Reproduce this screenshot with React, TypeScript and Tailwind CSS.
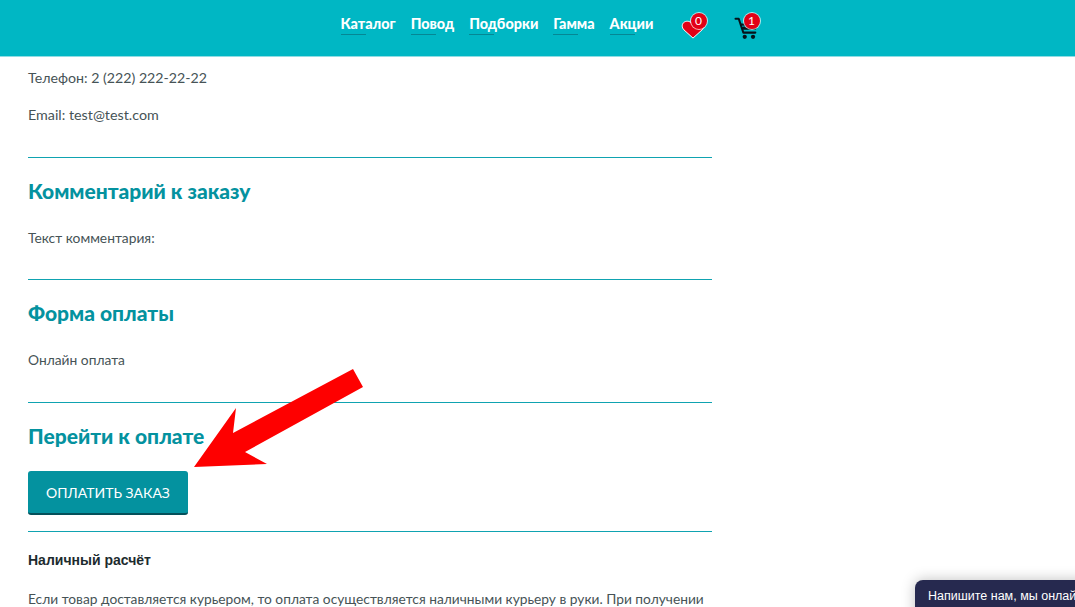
import React from 'react';

const navItems = ['Каталог', 'Повод', 'Подборки', 'Гамма', 'Акции'];

const Badge = ({ value, className }: { value: string; className: string }) => (
  <span className={`absolute top-0 flex h-[16px] w-[16px] items-center justify-center rounded-full bg-[#e30016] text-[12px] leading-none text-white ring-1 ring-white/70 ${className}`}>
    {value}
  </span>
);

const Section = ({ title, text }: { title: string; text: string }) => (
  <section className="border-t border-[#0fa3b1]">
    <h2 className="mt-[19px] text-[21px] font-black leading-[28px] text-[#04929f]">{title}</h2>
    <p className="mt-[22px] h-[52px] text-[13.8px] leading-[22px] text-[#465356]">{text}</p>
  </section>
);

export default function App() {
  return (
    <div className="relative h-[607px] w-[1075px] overflow-hidden bg-white font-['Lato','Open_Sans',sans-serif]">
      {/* Header */}
      <header className="flex h-[57px] items-start justify-center gap-[15px] border-b border-[#8fdde4] bg-[#00b7c4] pl-[29px] pt-[14px]">
        {navItems.map((item) => (
          <a key={item} className="relative text-[14.4px] font-black leading-[20px] text-white">
            {item}
            <span className="absolute left-0 top-[20px] h-px w-[25px] bg-[#058794]" />
          </a>
        ))}
        <div className="relative ml-[12px] mt-[-1px] h-[26px] w-[30px]">
          <svg viewBox="0 0 24 24" preserveAspectRatio="none" className="absolute left-0 top-[4px] h-[23px] w-[24px]" fill="#e30016" stroke="#fff" strokeWidth="1">
            <path d="M12 22 3 13.5C.5 11 .7 7 3.300 5.300 6 3.600 9.500 4.500 12 7.500c2.500-3 6-3.900 8.700-2.200 2.600 1.700 2.800 5.700.3 8.200Z" />
          </svg>
          <Badge value="0" className="left-[10px]" />
        </div>
        <div className="relative ml-[8px] mt-[-1px] h-[26px] w-[30px]">
          <svg viewBox="0 0 28 26" className="absolute left-0 top-[3px] h-[24px] w-[27px]" fill="none">
            <path d="M1 3h3.500l5 15h13" stroke="#06131a" strokeWidth="2.200" strokeLinecap="round" strokeLinejoin="round" />
            <path d="M6 8h20l-3 7H8.500Z" fill="#06131a" />
            <path d="M8 11h15" stroke="#00b7c4" strokeWidth="1" />
            <circle cx="11" cy="22.500" r="2.300" fill="#06131a" />
            <circle cx="20" cy="22.500" r="2.300" fill="#06131a" />
          </svg>
          <Badge value="1" className="left-[10px]" />
        </div>
      </header>

      {/* Order details */}
      <main className="ml-[28px] w-[684px]">
        <p className="mt-[10px] text-[14.2px] leading-[22px] text-[#465356]">Телефон: 2 (222) 222-22-22</p>
        <p className="mt-[15px] text-[14.300px] leading-[22px] text-[#465356]">Email: test@test.com</p>
        <div className="h-[31px]" />
        <Section title="Комментарий к заказу" text="Текст комментария:" />
        <Section title="Форма оплаты" text="Онлайн оплата" />
        <div className="h-px" />
        <section className="border-t border-[#0fa3b1]">
          <h2 className="mt-[19px] text-[21px] font-black leading-[28px] text-[#04929f]">Перейти к оплате</h2>
          <button className="mt-[21px] block h-[44px] w-[160px] rounded-[3px] border-b-2 border-[#04505a] bg-[#04929f] text-[14px] text-white">
            ОПЛАТИТЬ ЗАКАЗ
          </button>
          <div className="mt-[16px] border-t border-[#0fa3b1]" />
          <h3 className="mt-[18px] font-['Liberation_Sans',sans-serif] text-[14px] font-bold leading-[20px] text-[#1d2b2e]">
            Наличный расчёт
          </h3>
          <p className="mt-[18px] whitespace-nowrap text-[13.750px] leading-[22px] text-[#465356]">
            Если товар доставляется курьером, то оплата осуществляется наличными курьеру в руки. При получении
          </p>
        </section>
      </main>

      {/* Annotation arrow */}
      <svg viewBox="0 0 1075 607" className="pointer-events-none absolute inset-0 h-[607px] w-[1075px]">
        <polygon points="353,369 363,387 245,452 267,464 194,467 236,408 233,433" fill="#fe0000" />
      </svg>

      {/* Chat widget */}
      <div className="absolute left-[915px] top-[580px] h-[40px] w-[200px] rounded-t-[8px] bg-[#26294f] pl-[13px] pt-[8px] font-['Liberation_Sans',sans-serif] text-[12.5px] leading-[17px] whitespace-nowrap text-white shadow-[0_0_14px_rgba(0,0,0,0.25)]">
        Напишите нам, мы онлайн!
      </div>
    </div>
  );
}
